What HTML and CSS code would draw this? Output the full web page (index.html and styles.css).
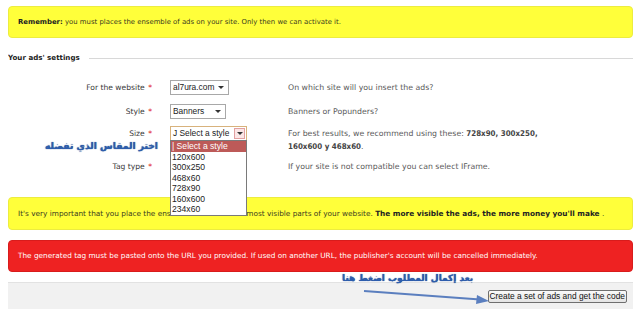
FILE: index.html
```html
<!DOCTYPE html>
<html lang="en">

<head>
    <meta charset="UTF-8">
    <title>Your ads' settings</title>
    <link rel="stylesheet" href="styles.css">
</head>

<body>
    <div class="page">
        <div class="notice notice-yellow notice-top">
            <b>Remember:</b> you must places the ensemble of ads on your site. Only then we can activate it.
        </div>

        <div class="section-title">
            <span>Your ads' settings</span>
            <div class="rule"></div>
        </div>

        <div class="form">
            <div class="row">
                <div class="label">For the website <span class="req">*</span></div>
                <div class="field">
                    <div class="select select-site">al7ura.com <span class="caret"></span></div>
                </div>
                <div class="help">On which site will you insert the ads?</div>
            </div>
            <div class="row">
                <div class="label">Style <span class="req">*</span></div>
                <div class="field">
                    <div class="select select-style">Banners <span class="caret"></span></div>
                </div>
                <div class="help">Banners or Popunders?</div>
            </div>
            <div class="row row-size">
                <div class="label">Size <span class="req">*</span></div>
                <div class="field">
                    <div class="select select-size">J Select a style <span class="caret-btn"><span class="caret"></span></span></div>
                    <ul class="dropdown">
                        <li class="active">| Select a style</li>
                        <li>120x600</li>
                        <li>300x250</li>
                        <li>468x60</li>
                        <li>728x90</li>
                        <li>160x600</li>
                        <li>234x60</li>
                    </ul>
                </div>
                <div class="help">For best results, we recommend using these: <b>728x90, 300x250,<br>160x600 y 468x60</b>.</div>
            </div>
            <div class="row row-tag">
                <div class="label">Tag type <span class="req">*</span></div>
                <div class="field"></div>
                <div class="help">If your site is not compatible you can select IFrame.</div>
            </div>

            <div class="note note-size">اختر المقاس الذي تفضله</div>
        </div>

        <div class="notice notice-yellow notice-mid">
            It's very important that you place the ensemble of ads on the most visible parts of your website. <b>The more visible the ads, the more money you'll make</b> .
        </div>

        <div class="notice notice-red">
            The generated tag must be pasted onto the URL you provided. If used on another URL, the publisher's account will be cancelled immediately.
        </div>

        <div class="actions">
            <button type="button">Create a set of ads and get the code</button>
            <div class="note note-submit">بعد إكمال المطلوب اضغط هنا</div>
            <svg class="arrow" width="140" height="20" viewBox="0 0 140 20">
                <line x1="2" y1="3" x2="118" y2="11.5" stroke="#5b7fbf" stroke-width="2" />
                <polygon points="127,13 115,7 114,16" fill="#5b7fbf" />
            </svg>
        </div>
    </div>
</body>

</html>
```

FILE: styles.css
```css
body {
    margin: 6px 7px 0 8px;
    font-family: "DejaVu Sans", Tahoma, sans-serif;
    font-size: 7.6px;
    color: #333;
    background: white;
}

.page {
    position: relative;
}

.notice {
    height: 32px;
    padding: 0 9px;
    line-height: 30px;
    border-radius: 4px;
    box-sizing: border-box;
    font-size: 7.33px;
    white-space: nowrap;
}

.notice-top {
    font-size: 6.9px;
}

.notice-yellow {
    background-color: #ffff3a;
    border: 1px solid #ecec40;
    color: #3a3a20;
}

.notice-red {
    background-color: #ee2222;
    border: 1px solid #d81c1c;
    color: #fff;
    margin-top: 10px;
}

.notice-mid {
    margin-top: 22px;
    height: 33px;
    line-height: 31px;
}

.notice b {
    color: #222;
}

.section-title {
    display: flex;
    align-items: center;
    margin-top: 14px;
    font-size: 7.1px;
    font-weight: bold;
    color: #222;
    line-height: 12px;
}

.section-title .rule {
    flex: 1;
    height: 1px;
    margin-left: 9px;
    background: #d8d8d8;
}

.form {
    position: relative;
    margin-top: 16px;
}

.row {
    display: grid;
    grid-template-columns: 144px 136px 1fr;
    margin-bottom: 8px;
}

.row-size {
    margin-top: -2px;
    margin-bottom: 6px;
}

.row-tag {
    margin-top: 1px;
}

.label {
    text-align: right;
    line-height: 16px;
    color: #3a3a3a;
}

.req {
    color: #e02020;
    margin-left: 1px;
}

.field {
    position: relative;
    padding-left: 18px;
}

.help {
    font-size: 7.8px;
    line-height: 13px;
    padding-top: 1px;
    color: #5a5a5a;
}

.help b {
    font-family: "DejaVu Sans Condensed", "DejaVu Sans", sans-serif;
    font-size: 7.9px;
    color: #444;
}

.select {
    position: relative;
    height: 15px;
    box-sizing: border-box;
    border: 1px solid #a8a8a8;
    background: white;
    font-family: "Liberation Sans", Arial, sans-serif;
    font-size: 8.4px;
    line-height: 13px;
    padding-left: 2px;
    color: #222;
    white-space: nowrap;
}

.select-site {
    width: 59px;
}

.select-style {
    width: 56px;
}

.select-size {
    width: 77px;
    border-color: #d8b27c;
}

.caret {
    position: absolute;
    right: 4px;
    top: 5px;
    width: 0;
    height: 0;
    border-left: 3px solid transparent;
    border-right: 3px solid transparent;
    border-top: 3px solid #333;
}

.caret-btn {
    position: absolute;
    right: 1px;
    top: 1px;
    width: 9px;
    height: 9px;
    border: 1px solid #e2a0a0;
    background: #fbe6e6;
}

.caret-btn .caret {
    right: 1px;
    top: 3px;
}

.dropdown {
    position: absolute;
    left: 18px;
    top: 14px;
    width: 77px;
    margin: 0;
    padding: 0;
    list-style: none;
    border: 1px solid #7a7a7a;
    background: white;
    box-sizing: border-box;
    font-family: "Liberation Sans", Arial, sans-serif;
    font-size: 8.6px;
    line-height: 10.5px;
    color: #222;
    z-index: 2;
}

.dropdown li {
    padding-left: 1px;
}

.dropdown li.active {
    background: #bd5a58;
    color: #fff;
}

.note {
    position: absolute;
    font-family: "DejaVu Sans", sans-serif;
    font-weight: bold;
    color: #2c5dae;
    text-shadow: 0 0 1px #1b3d7a;
    white-space: nowrap;
}

.note-size {
    right: 475px;
    top: 60px;
    font-size: 9.2px;
}

.actions {
    position: relative;
    display: flex;
    justify-content: flex-end;
    align-items: center;
    height: 27px;
    margin-top: 10px;
    padding-right: 6px;
    background: #f1f1f1;
    border-top: 1px solid #e2e2e2;
    box-sizing: border-box;
}

.actions button {
    height: 13px;
    padding: 0 1px;
    border: 1px solid #6f6f6f;
    border-radius: 2px;
    background: linear-gradient(#fafafa, #e4e4e4);
    font-family: "Liberation Sans", Arial, sans-serif;
    font-size: 8.4px;
    line-height: 11px;
    color: #111;
}

.note-submit {
    left: 334px;
    top: -10px;
    font-size: 9px;
}

.arrow {
    position: absolute;
    left: 354px;
    top: 5px;
}
```
